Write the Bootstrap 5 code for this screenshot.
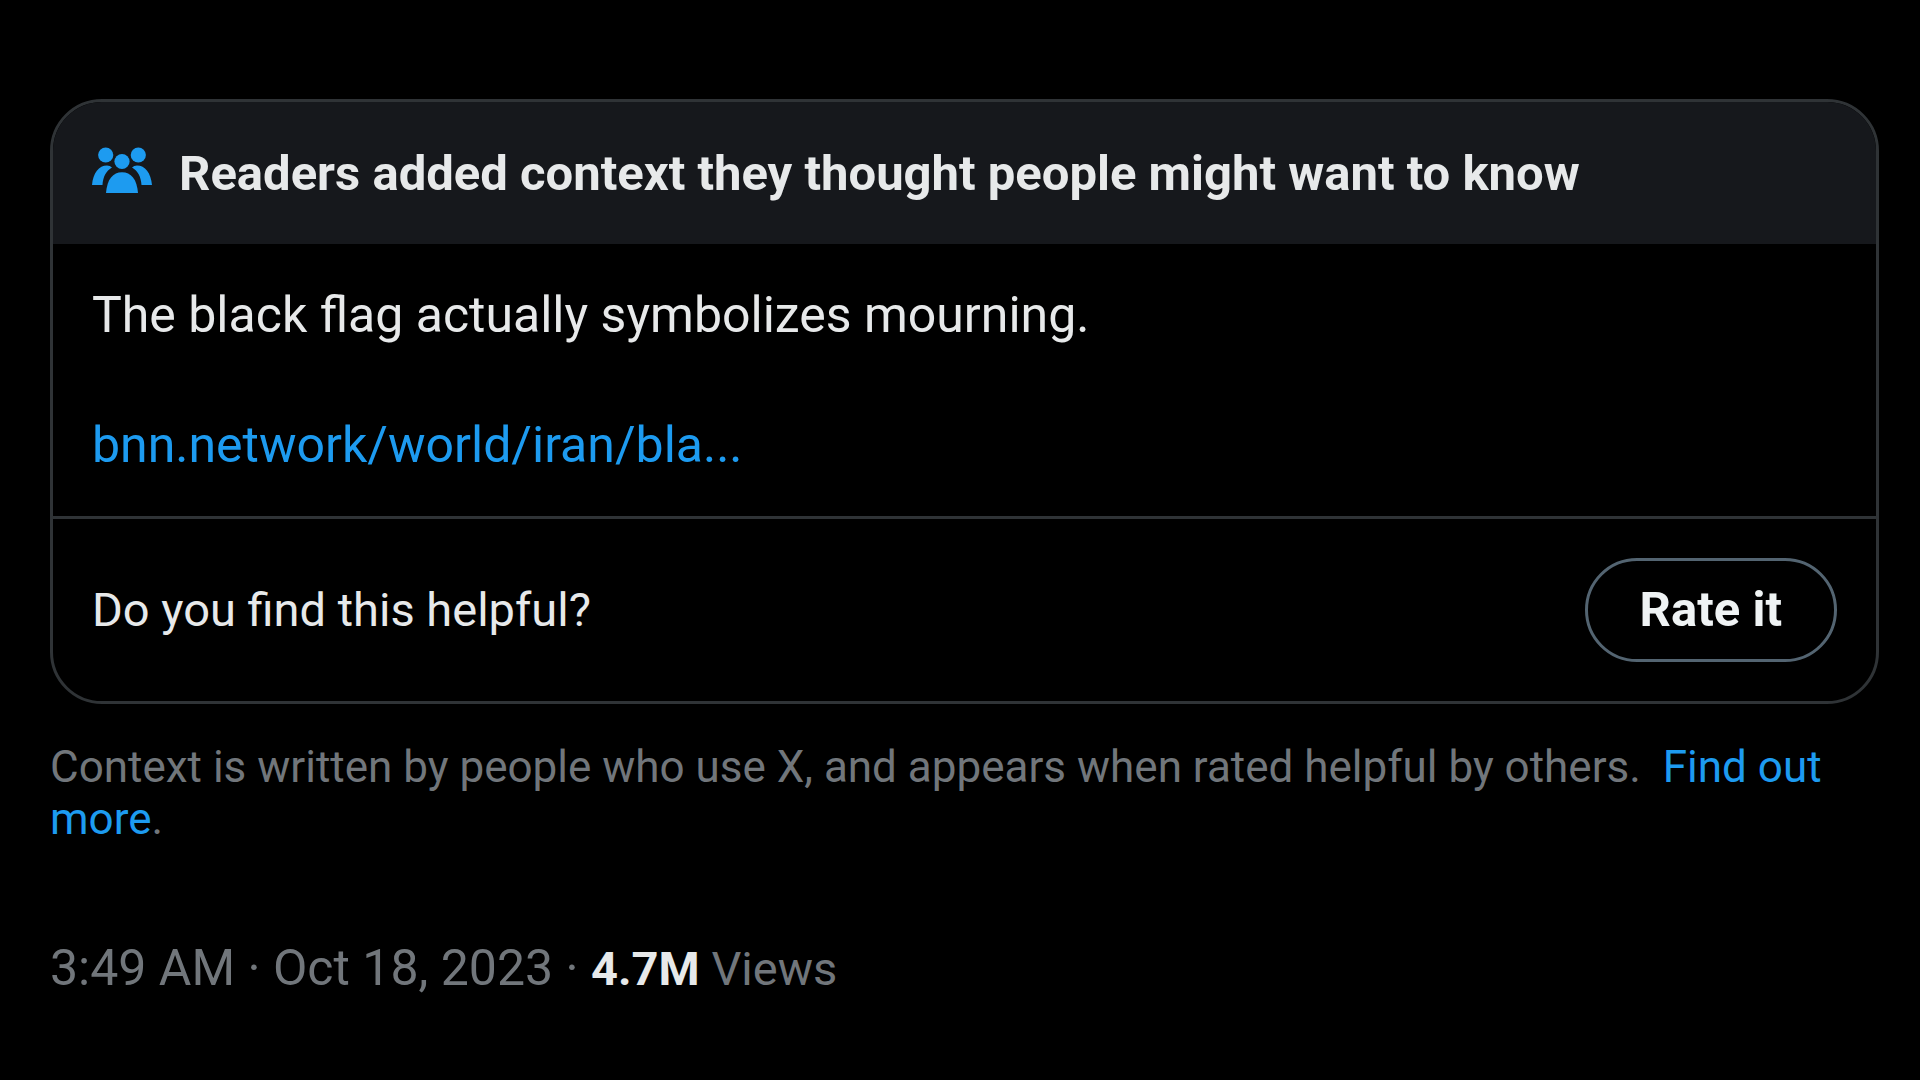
<!DOCTYPE html>
<html lang="en">
<head>
<meta charset="utf-8">
<meta name="viewport" content="width=device-width, initial-scale=1">
<title>Readers added context</title>
<link href="https://cdn.jsdelivr.net/npm/bootstrap@5.3.0/dist/css/bootstrap.min.css" rel="stylesheet">
<style>
  body { background: #000; color: #e7e9ea; font-family: Roboto, "Liberation Sans", sans-serif; }
  a { color: #1d9bf0; }
  .page { padding: 99px 41px 40px 50px; }
  .note { --bs-card-bg: #000; --bs-card-color: #e7e9ea; border: 3px solid #2f3336; border-radius: 52px; overflow: hidden; }
  .note-head { background: #16181c; padding: 40px 39px 38px; gap: 27px; }
  .note-title { font-size: 49px; line-height: 64px; font-weight: 700; }
  .note-icon { width: 60px; height: 46px; margin-bottom: 8px; }
  .note-text { padding: 39px 39px 38px; font-size: 50px; line-height: 65px; }
  .note-foot { border-top: 3px solid #2f3336; padding: 39px; font-size: 47px; line-height: 64px; }
  .rate { border: 3px solid #536471; color: #eff3f4; font-size: 49px; line-height: 64px; font-weight: 700; padding: 17px 52px; }
  .rate:hover { background: #181919; color: #eff3f4; border-color: #536471; }
  .about { font-size: 44px; line-height: 52px; color: #71767b; margin-top: 37px; }
  .meta { font-size: 50px; line-height: 64px; color: #71767b; margin-top: 91px; }
  .views { font-size: 47px; }
  .views b { color: #e7e9ea; }
</style>
</head>
<body>
<main class="page">
  <section class="card note">
    <header class="note-head d-flex align-items-center">
      <svg class="note-icon flex-shrink-0" viewBox="0 0 60 46" fill="#1d9bf0" aria-hidden="true">
        <circle cx="13.7" cy="8" r="7.6"/><circle cx="46.3" cy="8" r="7.6"/><circle cx="30" cy="14.5" r="7.6"/>
        <path d="M14 46C15 32 21 25.200 30 25.200S45 32 46 46Z"/>
        <path d="M0 38C1 26 7 18.500 15 18.500Q18 18.500 20 20.500C14 24 11 30 10.500 38Z"/>
        <path d="M60 38C59 26 53 18.500 45 18.500Q42 18.500 40 20.500C46 24 49 30 49.500 38Z"/>
      </svg>
      <h1 class="note-title mb-0">Readers added context they thought people might want to know</h1>
    </header>
    <div class="note-text">
      <p class="mb-0">The black flag actually symbolizes mourning.</p>
      <br>
      <a class="text-decoration-none" href="#">bnn.network/world/iran/bla...</a>
    </div>
    <footer class="note-foot d-flex align-items-center justify-content-between">
      <span>Do you find this helpful?</span>
      <button type="button" class="btn rate rounded-pill">Rate it</button>
    </footer>
  </section>
  <p class="about mb-0">Context is written by people who use X, and appears when rated helpful by others.&nbsp; <a class="text-decoration-none" href="#">Find out more</a>.</p>
  <p class="meta mb-0">3:49 AM · Oct 18, 2023 · <span class="views"><b>4.7M</b> Views</span></p>
</main>
<script src="https://cdn.jsdelivr.net/npm/bootstrap@5.3.0/dist/js/bootstrap.bundle.min.js"></script>
</body>
</html>
